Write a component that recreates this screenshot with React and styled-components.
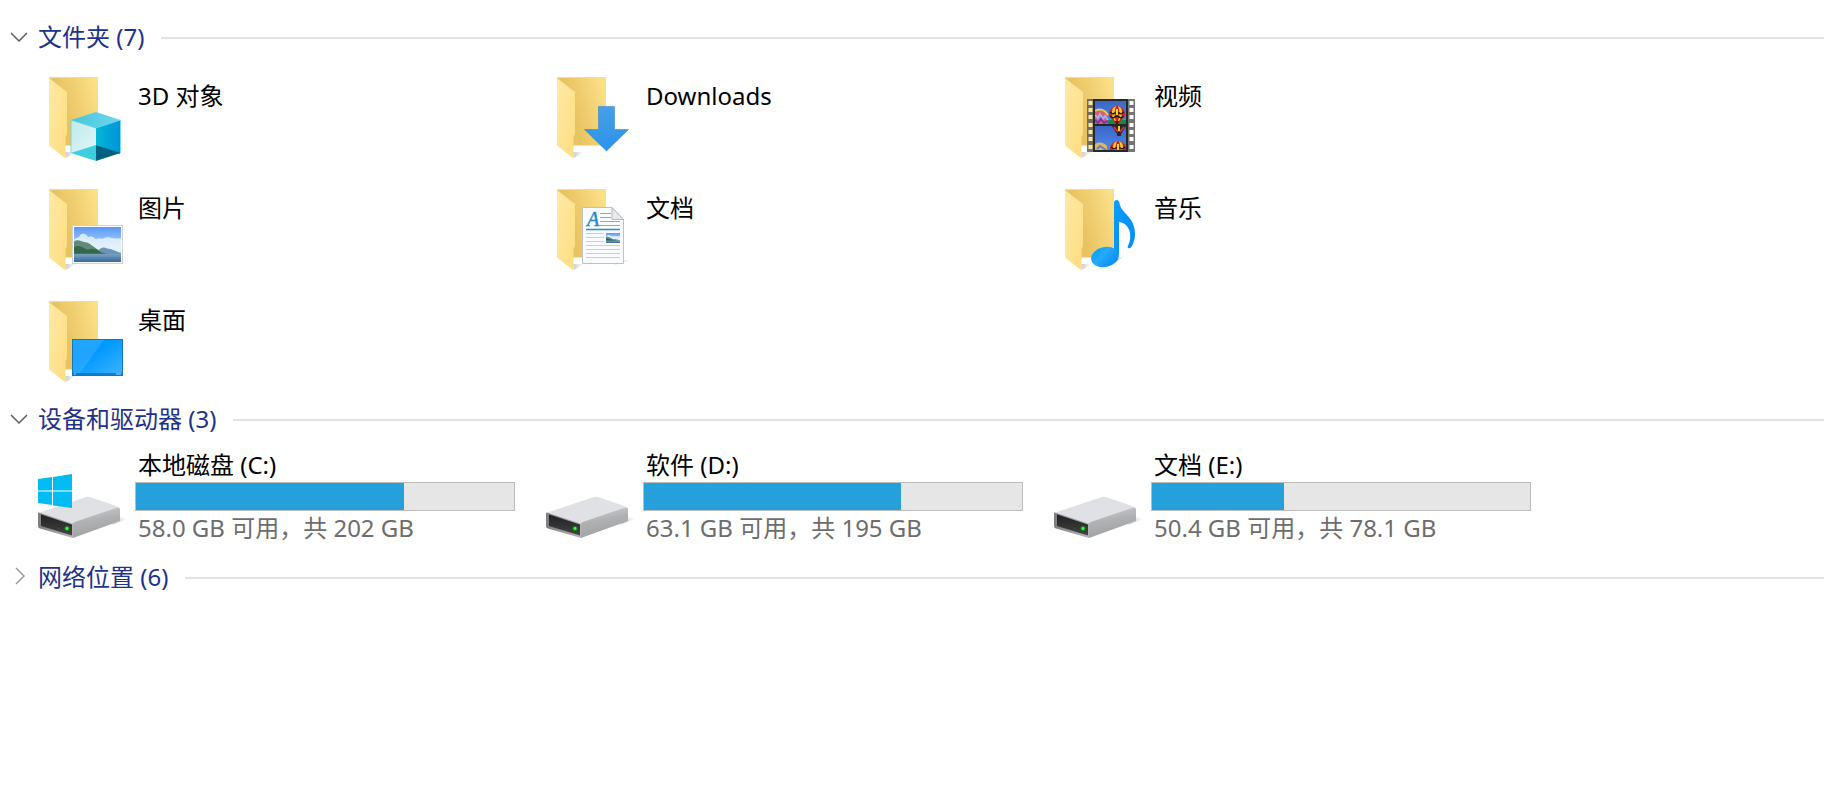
import React from "react"
import styled, { createGlobalStyle } from "styled-components"

const navy = "#1e3287"
const lineGray = "#e2e2e2"
const textGray = "#6d6d6d"
const barBlue = "#26a0da"

const GlobalStyle = createGlobalStyle`
  * {
    box-sizing: border-box;
  }
  body {
    margin: 0;
    background-color: #ffffff;
    color: #000000;
    font-family: "Noto Sans", "Noto Sans CJK SC", sans-serif;
    font-size: 24px;
    line-height: 32px;
  }
`

const Page = styled.main`
  padding: 20px 9px 0 9px;
`

const GroupHeader = styled.h2`
  display: flex;
  align-items: center;
  gap: 17px;
  margin: 0;
  font-size: 24px;
  font-weight: 400;
`

const GroupToggle = styled.button`
  display: flex;
  align-items: center;
  gap: 9px;
  padding: 0;
  border: none;
  background: none;
  color: ${navy};
  font: inherit;
  line-height: 34px;
  white-space: nowrap;
  cursor: pointer;
`

const Chevron = styled.svg`
  width: 20px;
  height: 20px;
  fill: none;
  stroke: ${props => (props.$open ? "#5c5c5c" : "#9a9a9a")};
  stroke-width: 1.5;
`

const HeaderLine = styled.span`
  flex: 1;
  height: 2px;
  margin-top: 2px;
  background-color: ${lineGray};
`

const Grid = styled.ul`
  display: grid;
  grid-template-columns: repeat(auto-fill, 508px);
  row-gap: 16px;
  margin: 0;
  padding: ${props => props.$padding};
  list-style: none;
`

const FolderLink = styled.a`
  display: flex;
  gap: 10px;
  color: inherit;
  text-decoration: none;
`

const FolderIcon = styled.svg`
  width: 90px;
  height: 96px;
`

const FolderName = styled.span`
  padding-top: 10px;
`

const DriveLink = styled(FolderLink)`
  gap: 7px;
`

const DriveIcon = styled.svg`
  width: 90px;
  height: 96px;
`

const DriveInfo = styled.div`
  display: flex;
  flex-direction: column;
  width: 380px;
`

const DriveText = styled.span`
  padding-left: 3px;
  color: ${props => (props.$muted ? textGray : "#000000")};
`

const UsageBar = styled.div`
  height: 29px;
  margin: 1px 0;
  border: 1px solid #bcbcbc;
  background-color: #e6e6e6;
`

const UsageFill = styled.div`
  height: 100%;
  background-color: ${barBlue};
`

const Defs = styled.svg`
  display: block;
  width: 0;
  height: 0;
`

// gradients shared by all the icons below
const IconDefs = () => (
  <Defs aria-hidden="true">
    <defs>
      <linearGradient id="folderBack" x1="0" y1="0.6" x2="1" y2="0.2">
        <stop offset="0.3" stopColor="#e8c362" />
        <stop offset="1" stopColor="#fce088" />
      </linearGradient>
      <linearGradient id="folderFront" x1="0" y1="0" x2="1" y2="1">
        <stop offset="0" stopColor="#ffe9a6" />
        <stop offset="1" stopColor="#fddd80" />
      </linearGradient>
      <linearGradient id="shade" x1="0" y1="0" x2="1" y2="0">
        <stop offset="0" stopColor="#000" stopOpacity="0.2" />
        <stop offset="1" stopColor="#000" stopOpacity="0" />
      </linearGradient>
      <linearGradient id="cubeLeft" x1="0" y1="0" x2="1" y2="1">
        <stop offset="0" stopColor="#bfeaea" />
        <stop offset="1" stopColor="#e0f6fb" />
      </linearGradient>
      <linearGradient id="cubeRight" x1="0" y1="0" x2="1" y2="0">
        <stop offset="0" stopColor="#00b7d4" />
        <stop offset="1" stopColor="#0093dc" />
      </linearGradient>
      <linearGradient id="cubeTop" x1="0" y1="0" x2="1" y2="0">
        <stop offset="0" stopColor="#45c7d8" />
        <stop offset="1" stopColor="#6fd6f2" />
      </linearGradient>
      <linearGradient id="arrow" x1="0" y1="0" x2="0" y2="1">
        <stop offset="0" stopColor="#479fe6" />
        <stop offset="1" stopColor="#2b93ea" />
      </linearGradient>
      <linearGradient id="sky" x1="0" y1="0" x2="0" y2="1">
        <stop offset="0" stopColor="#5a97f8" />
        <stop offset="0.6" stopColor="#b6dcfb" />
        <stop offset="1" stopColor="#e2f3fd" />
      </linearGradient>
      <linearGradient id="lake" x1="0" y1="0" x2="0" y2="1">
        <stop offset="0" stopColor="#7ba3c4" />
        <stop offset="1" stopColor="#36699b" />
      </linearGradient>
      <linearGradient id="filmSky" x1="0" y1="0" x2="0" y2="1">
        <stop offset="0" stopColor="#3a66c8" />
        <stop offset="1" stopColor="#4f8ae6" />
      </linearGradient>
      <linearGradient id="note" x1="0" y1="0" x2="1" y2="1">
        <stop offset="0" stopColor="#0c9dff" />
        <stop offset="1" stopColor="#008cf5" />
      </linearGradient>
      <linearGradient id="noteHead" x1="0" y1="0" x2="1" y2="1">
        <stop offset="0" stopColor="#009cff" />
        <stop offset="0.4" stopColor="#25aaff" />
        <stop offset="1" stopColor="#0084ea" />
      </linearGradient>
      <linearGradient id="screen" x1="0" y1="0" x2="1" y2="1">
        <stop offset="0.4" stopColor="#0099ff" />
        <stop offset="1" stopColor="#3fb2ff" />
      </linearGradient>
      <linearGradient id="driveSide" x1="0" y1="0" x2="0.3" y2="1">
        <stop offset="0" stopColor="#d2d3d5" />
        <stop offset="0.5" stopColor="#b0b1b3" />
        <stop offset="1" stopColor="#a0a1a3" />
      </linearGradient>
      <linearGradient id="driveFace" x1="0" y1="0" x2="1" y2="0">
        <stop offset="0" stopColor="#7d7e80" />
        <stop offset="1" stopColor="#b4b5b7" />
      </linearGradient>
      <linearGradient id="driveSlot" x1="0" y1="0" x2="0" y2="1">
        <stop offset="0" stopColor="#202020" />
        <stop offset="1" stopColor="#444444" />
      </linearGradient>
    </defs>
  </Defs>
)

const FolderBase = () => (
  <g>
    <path d="M27 82 L38 82 L28 88 Z" fill="url(#shade)" />
    <path d="M11 7 H60 V75.500 H28 L11 72 Z" fill="url(#folderBack)" />
    <path d="M11 7.500 H60" stroke="#f5dc98" />
    <path d="M11 8 L29 22 V64 L27.500 67 V88.500 L11 75.500 Z" fill="url(#folderFront)" />
  </g>
)

const Cube = () => (
  <g>
    <path d="M82 77 L89 78 L70 86 Z" fill="url(#shade)" />
    <path d="M33 50 L58 58 V75 L33 84 Z" fill="url(#cubeLeft)" />
    <path d="M82 50 L58 58 V75 L82 84 Z" fill="url(#cubeRight)" />
    <path d="M58 42 L82.500 50 L58 58 L33 50 Z" fill="url(#cubeTop)" />
    <path d="M58 75 L82.500 83 L58 91 Z" fill="#00607f" />
    <path d="M58 75 L33 83 L58 91 Z" fill="#3dcfe0" />
    <path d="M33 50 L58 58 L82.500 50 M33 50 V83 M82.500 50 V83" fill="none" stroke="#5fd3e8" strokeWidth="0.8" />
  </g>
)

const DownArrow = () => (
  <path d="M52.500 36.500 H68.500 V59.500 H82.500 L60.500 81 L38.500 59.500 H52.500 Z" fill="url(#arrow)" stroke="#3c86c8" strokeWidth="0.6" />
)

const Balloon = ({ x, y }) => (
  <g transform={`translate(${x} ${y})`}>
    <path d="M8 0 C13 0 16 4 16 8 C16 12 11 14 10 18 H6 C5 14 0 12 0 8 C0 4 3 0 8 0 Z" fill="#c9252a" />
    <path d="M4 2 C2 6 3 11 6 15 L7 15 C5 10 5 5 7 0 Z M9 0 C11 5 11 10 9 15 L10 15 C13 11 14 6 12 2 Z" fill="#f0d024" />
    <path d="M1 6 L4 8 L8 6 L12 8 L15 6 M1 10 L4 12 L8 10 L12 12 L15 10" fill="none" stroke="#201818" strokeWidth="1.4" />
    <path d="M7 3 H9 V9 H7 Z" fill="#f7d820" />
    <path d="M6 15 H10 L9 18 H7 Z" fill="#4a1c14" />
  </g>
)

const FilmStrip = () => (
  <g>
    <path d="M81 80 L88 80 L70 82 Z" fill="url(#shade)" />
    <rect x="33" y="29" width="48" height="53" fill="#5c5c5c" fillOpacity="0.85" />
    <rect x="39" y="29" width="35" height="53" fill="#252729" />
    <svg x="41" y="31" width="31" height="23" viewBox="0 0 31 23">
      <rect width="31" height="23" fill="url(#filmSky)" />
      <path d="M14 19 H31 V23 H12 Z" fill="#128a46" />
      <path d="M0 11 C5 7 10 10 13 14 V23 H0 Z" fill="#e05a72" />
      <path d="M0 10 C5 7 10 9 13 14" fill="none" stroke="#e6cf5a" strokeWidth="2" />
      <path d="M0 14 L3 17 L5 13 L8 18 L10 15 L13 19" fill="none" stroke="#9fb4ee" strokeWidth="2" />
      <path d="M0 19 L3 22 L6 18 L9 22 L13 20" fill="none" stroke="#7638a8" strokeWidth="2" />
      <Balloon x={14} y={5} />
    </svg>
    <svg x="41" y="56" width="31" height="24" viewBox="0 0 31 24">
      <rect width="31" height="24" fill="url(#filmSky)" />
      <path d="M17 0 H31 L26 8 H22 Z" fill="#302028" />
      <path d="M19 1 L23 6 M29 1 L25 6" stroke="#db3038" strokeWidth="2" />
      <path d="M23 0 H25 V5 H23 Z" fill="#f0cf35" />
      <path d="M22 8 H26 V10 H22 Z" fill="#3a2018" />
      <path d="M0 18 C5 15 9 17 12 20 V24 H0 Z" fill="#dfb956" />
      <path d="M2 23 L5 20 L11 24" fill="none" stroke="#5f7fd8" strokeWidth="2" />
      <Balloon x={15} y={15} />
    </svg>
    {[30, 37, 44, 52, 59, 66, 74].map(y => (
      <g key={y}>
        <rect x="34.500" y={y + 1} width="4" height="4" fill="#fbe49d" />
        <rect x="75.500" y={y + 1} width="4" height="4" fill="#ffffff" />
      </g>
    ))}
  </g>
)

const Landscape = ({ x, y, width, height }) => (
  <svg x={x} y={y} width={width} height={height} viewBox="0 0 47 34" preserveAspectRatio="none">
    <rect width="47" height="34" fill="url(#sky)" />
    <path d="M0 12 C3 10 5 11 6 8 C9 5 13 7 14 10 C18 8 20 11 22 12 C25 10 27 12 30 11 C34 8 38 12 47 11 V26 H0 Z" fill="#edf6fd" fillOpacity="0.8" />
    <path d="M22 25 C27 20 29 19 33 21 C38 21 41 24 47 25 V27 H22 Z" fill="#6a95b8" />
    <path d="M0 14 C5 11 7 15 13 15 C18 17 20 20 26 23 L32 26 H0 Z" fill="#628a7b" />
    <path d="M0 20 C6 16 9 21 14 22 C20 20 23 22 27 25 L38 27 H0 Z" fill="#34664a" />
    <rect y="26" width="47" height="8" fill="url(#lake)" />
  </svg>
)

const Photo = () => (
  <g>
    <path d="M86 78 L90 78 L78 83 Z" fill="url(#shade)" />
    <rect x="34.500" y="43.500" width="50" height="38" fill="#ffffff" stroke="#cfd1d3" />
    <Landscape x={36} y={45} width={47} height={35} />
  </g>
)

const Paper = () => (
  <g>
    <path d="M77 78 L86 78 L68 83 Z" fill="url(#shade)" />
    <path d="M36.500 25.500 H66 L77.500 37.500 V81.500 H36.500 Z" fill="#fafbfc" stroke="#bfc2c5" />
    <path d="M66 25.500 V37.500 H77.500 Z" fill="#e8eaec" stroke="#b5b8bb" strokeLinejoin="round" />
    <path d="M54 31.500 H65 M54 35.500 H65 M54 39.500 H74 M54 43.500 H74" stroke="#68b5e6" />
    <path d="M40 47.500 H74" stroke="#1e8fdc" strokeWidth="1.4" />
    <path d="M40 51.500 H58 M40 55.500 H58 M40 59.500 H58 M40 63.500 H74 M40 67.500 H74 M40 71.500 H74 M40 75.500 H74" stroke="#cbcdd0" />
    <text x="41" y="44" fontFamily="Liberation Serif, serif" fontSize="20" fontStyle="italic" fill="#1e86d2" stroke="#1e86d2" strokeWidth="0.4">A</text>
    <Landscape x={60} y={51} width={14} height={10} />
  </g>
)

const MusicNote = () => (
  <g>
    <path d="M64 76 L72 73 L60 82 Z" fill="url(#shade)" />
    <path d="M60 21 C60 17 65 17 65.500 21 C67 32 81 34 81 52 C81 59 78 65 76 66 C74 67 73 65 74 64 C78 57 78 42 65 40 V72 H60 Z" fill="url(#note)" />
    <ellipse cx="51" cy="75" rx="14" ry="10" transform="rotate(-12 51 75)" fill="url(#noteHead)" />
  </g>
)

const Desktop = () => (
  <g>
    <path d="M85 79 L90 79 L74 82 Z" fill="url(#shade)" />
    <rect x="34.500" y="45.500" width="50" height="36" fill="url(#screen)" stroke="#1477be" />
    <path d="M35 46 H66 L42 79 H35 Z" fill="#ffffff" fillOpacity="0.12" />
    <path d="M35 80 H84" stroke="#0f6fb3" strokeWidth="1.500" />
    <path d="M36 80 H38 M78 80 H83" stroke="#a6d8f8" strokeWidth="1" />
  </g>
)

const WindowsLogo = () => (
  <g fill="#00bcf2">
    <path d="M0 22 L14 20 V33.500 H0 Z" />
    <path d="M15 20 L34 17 V33.500 H15 Z" />
    <path d="M0 34.500 H14 V48 L0 46 Z" />
    <path d="M15 34.500 H34 V51 L15 48.500 Z" />
  </g>
)

const DriveBody = () => (
  <g>
    <path d="M80 60 L90 62 L74 68 Z" fill="url(#shade)" />
    <path d="M0 56 L48 40 Q50 39.500 52 40 L81 50 V53 L34 69 Z" fill="#e0e1e5" />
    <path d="M34 67 Q35 65.500 38 64.500 L78 51 Q82 50 82 52 V64 L35 81 Z" fill="url(#driveSide)" />
    <path d="M0 56 Q1 55 2 56 L33 66 Q35 67 35 69 V81 L2 71.500 Q0 71 0 69 Z" fill="url(#driveFace)" />
    <path d="M3 57.500 L34 67.500 V78.500 L3 69 Z" fill="url(#driveSlot)" />
    <circle cx="29" cy="71.500" r="2.500" fill="#128a18" />
    <circle cx="29" cy="71.500" r="1.400" fill="#3cff48" />
  </g>
)

const folders = [
  ["3D 对象", Cube],
  ["Downloads", DownArrow],
  ["视频", FilmStrip],
  ["图片", Photo],
  ["文档", Paper],
  ["音乐", MusicNote],
  ["桌面", Desktop],
]

const drives = [
  { name: "本地磁盘 (C:)", space: "58.0 GB 可用，共 202 GB", used: 71, system: true },
  { name: "软件 (D:)", space: "63.1 GB 可用，共 195 GB", used: 68 },
  { name: "文档 (E:)", space: "50.4 GB 可用，共 78.1 GB", used: 35 },
]

const Group = ({ title, startOpen = false, children }) => {
  const [open, setOpen] = React.useState(startOpen)
  const toggle = () => setOpen(!open)
  return <section>
    <GroupHeader>
      <GroupToggle onClick={toggle} aria-expanded={open}>
        <Chevron viewBox="0 0 20 20" $open={open}>
          <path d={open ? "M2 6 L10 14 L18 6" : "M7 1 L15 9 L7 17"} />
        </Chevron>
        {title}
      </GroupToggle>
      <HeaderLine />
    </GroupHeader>
    {open && children}
  </section>
}

const App = () => {
  return <Page>
    <GlobalStyle />
    <IconDefs />
    <Group title="文件夹 (7)" startOpen>
      <Grid $padding="16px 0 12px 29px">
        {folders.map(([name, Overlay]) => (
          <li key={name}>
            <FolderLink href="#">
              <FolderIcon viewBox="0 0 90 96">
                <FolderBase />
                <Overlay />
              </FolderIcon>
              <FolderName>{name}</FolderName>
            </FolderLink>
          </li>
        ))}
      </Grid>
    </Group>
    <Group title="设备和驱动器 (3)" startOpen>
      <Grid $padding="13px 0 15px 29px">
        {drives.map(drive => (
          <li key={drive.name}>
            <DriveLink href="#">
              <DriveIcon viewBox="0 -8 90 96">
                <DriveBody />
                {drive.system && <WindowsLogo />}
              </DriveIcon>
              <DriveInfo>
                <DriveText>{drive.name}</DriveText>
                <UsageBar>
                  <UsageFill style={{ width: `${drive.used}%` }} />
                </UsageBar>
                <DriveText $muted>{drive.space}</DriveText>
              </DriveInfo>
            </DriveLink>
          </li>
        ))}
      </Grid>
    </Group>
    <Group title="网络位置 (6)" />
  </Page>
}

export default App
